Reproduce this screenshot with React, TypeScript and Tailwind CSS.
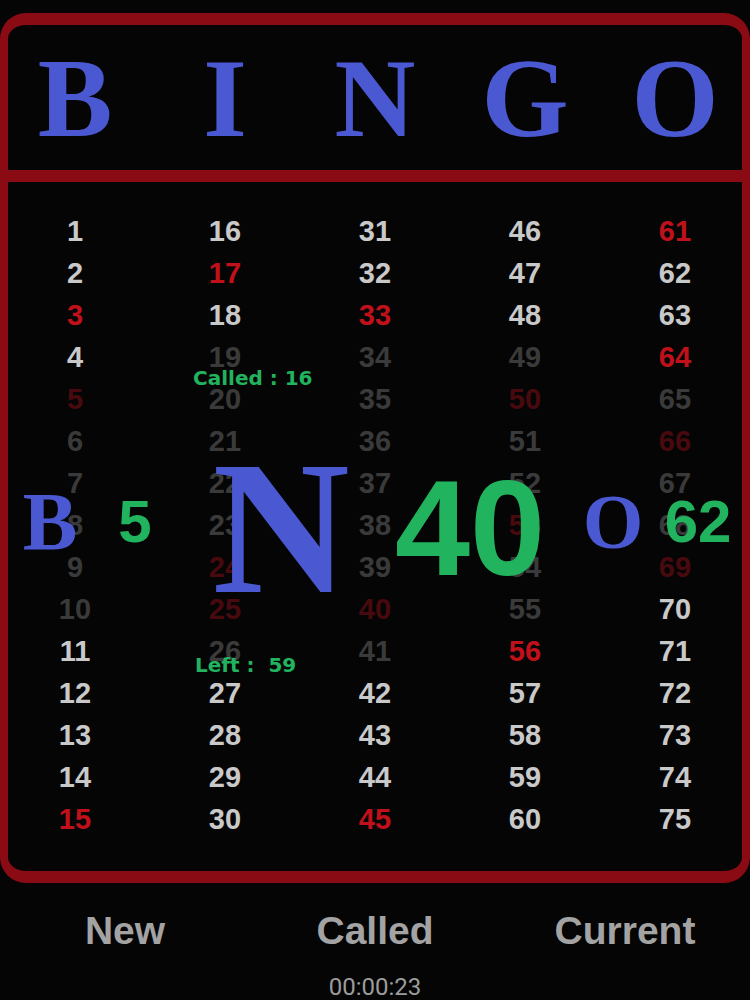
const RED = [3, 15, 17, 33, 45, 56, 61, 64];
const DIM = [6, 7, 8, 9, 10, 19, 20, 21, 22, 23, 26, 34, 35, 36, 37, 38, 39, 41, 49, 51, 52, 54, 55, 65, 67, 68];
const DIM_RED = [5, 24, 25, 40, 50, 53, 66, 69];

function cellColor(n: number) {
  if (RED.includes(n)) return 'text-[#c0111b]';
  if (DIM_RED.includes(n)) return 'text-[#480a0e]';
  if (DIM.includes(n)) return 'text-[#3a3a3a]';
  return 'text-[#c9c9c9]';
}

const rows = Array.from({ length: 15 }, (_, r) => [1, 16, 31, 46, 61].map((s) => s + r));

function Overlay() {
  return (
    <div className="absolute top-0 bottom-0 left-[-8px] right-[-8px] flex flex-col pointer-events-none">
      <div className="mt-[184px] h-[24px] pl-[193px] text-[20px] leading-[24px] font-bold text-[#22b35e] font-['DejaVu_Sans',sans-serif]">
        Called : 16
      </div>
      <div className="mt-[32px] h-[200px] flex items-center">
        <div className="w-[100px] flex justify-center text-[82px] leading-none font-bold text-[#4a59d2] font-['Liberation_Serif',serif]">
          B
        </div>
        <div className="w-[70px] flex justify-center text-[60px] leading-none font-bold text-[#22b35e]">5</div>
        <div className="w-[222px] mt-[12px] flex justify-center text-[190px] leading-none font-bold text-[#4a59d2] font-['Liberation_Serif',serif]">
          N
        </div>
        <div className="w-[156px] mt-[12px] flex justify-center text-[135px] leading-none font-bold text-[#22b35e]">
          40
        </div>
        <div className="w-[130px] flex justify-center text-[78px] leading-none font-bold text-[#4a59d2] font-['Liberation_Serif',serif]">
          O
        </div>
        <div className="w-[40px] flex justify-center text-[60px] leading-none font-bold text-[#22b35e]">62</div>
      </div>
      <div className="mt-[31px] h-[24px] pl-[195px] text-[20px] leading-[24px] font-bold text-[#22b35e] whitespace-pre font-['DejaVu_Sans',sans-serif]">
        {'Left :  59'}
      </div>
    </div>
  );
}

export default function App() {
  return (
    <div className="min-h-screen bg-[#050505] pt-[13px] font-['Liberation_Sans',Arial,sans-serif]">
      <div className="border-x-[8px] border-y-[12px] border-[#8b0b14] rounded-[26px]">
        <div className="h-[145px] -mx-[8px] grid grid-cols-5 items-center">
          {['B', 'I', 'N', 'G', 'O'].map((l) => (
            <div
              key={l}
              className="text-center text-[112px] leading-none font-bold text-[#4a59d2] font-['Liberation_Serif',serif]"
            >
              {l}
            </div>
          ))}
        </div>
        <div className="h-[12px] bg-[#8b0b14]" />
        <div className="relative pt-[28px] pb-[31px]">
          <div className="-mx-[8px] grid grid-cols-5">
            {rows.flat().map((n) => (
              <div
                key={n}
                className={`h-[42px] flex items-center justify-center text-[29px] leading-none font-bold ${cellColor(n)}`}
              >
                {n}
              </div>
            ))}
          </div>
          <Overlay />
        </div>
      </div>
      <div className="mt-[28px] grid grid-cols-3 text-[39px] leading-none font-bold text-[#a3a3a3]">
        <div className="text-center">New</div>
        <div className="text-center">Called</div>
        <div className="text-center">Current</div>
      </div>
      <div className="mt-[25px] text-center text-[24px] leading-none text-[#9c9c9c] font-['Roboto',sans-serif]">
        00:00:23
      </div>
    </div>
  );
}
